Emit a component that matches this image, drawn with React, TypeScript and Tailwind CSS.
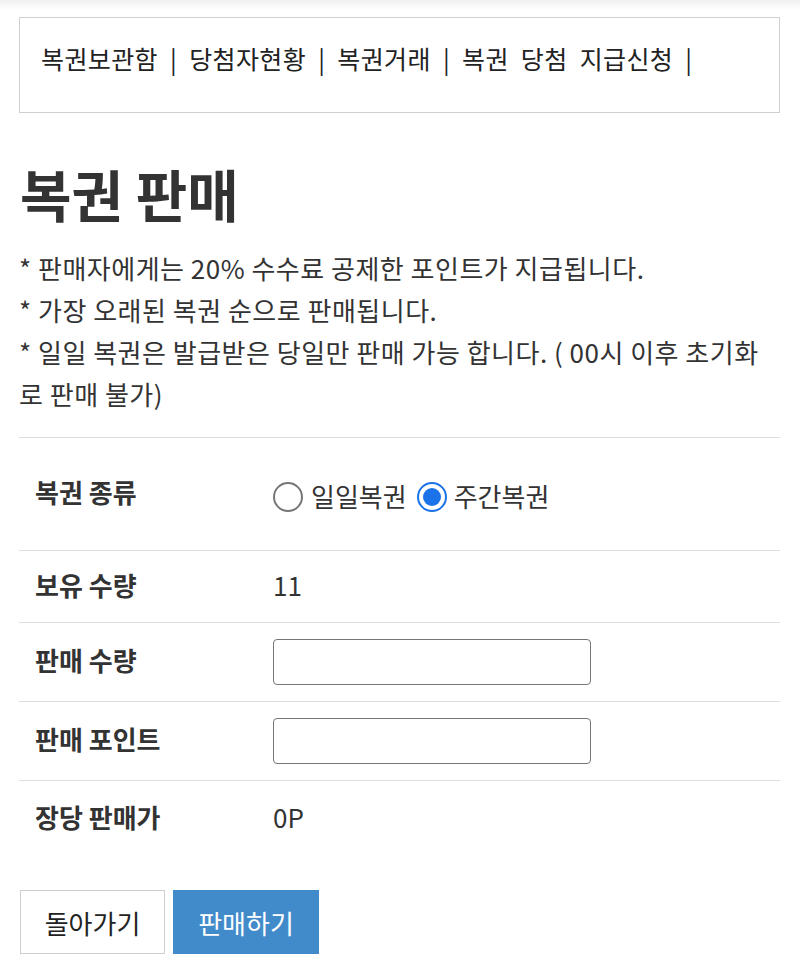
import React from "react";

const font = { fontFamily: '"Noto Sans CJK KR", "Noto Sans", sans-serif' };

function Radio({ checked }: { checked?: boolean }) {
  return checked ? (
    <span className="inline-flex w-[30px] h-[30px] rounded-full border-[2px] border-[#1a73e8] items-center justify-center bg-white">
      <span className="w-[18px] h-[18px] rounded-full bg-[#1a73e8]" />
    </span>
  ) : (
    <span className="inline-block w-[30px] h-[30px] rounded-full border-[2px] border-[#767676] bg-white" />
  );
}

function Row({
  label,
  children,
  h,
  last,
}: {
  label: string;
  children: React.ReactNode;
  h: string;
  last?: boolean;
}) {
  return (
    <div className={`flex items-center ${h} ${last ? "" : "border-b border-[#dedede]"}`}>
      <div className="w-[254px] pl-[16px] pb-[5px] text-[26px] font-bold text-[#333]">{label}</div>
      <div className="flex-1 flex items-center text-[26px] text-[#333]">{children}</div>
    </div>
  );
}

export default function App() {
  return (
    <div className="bg-white min-h-[967px] text-[#333]" style={font}>
      <div className="h-[10px] bg-gradient-to-b from-[#f0f0f0] to-white" />
      <div className="pl-[19px] pr-[20px] pt-[7px]">
        <div className="border border-[#d0d0d0] h-[96px] pt-[22px] pl-[21px] text-[25px] leading-[36px] text-[#222] tracking-[0.4px] [word-spacing:6px]">
          복권보관함 | 당첨자현황 | 복권거래 | 복권 당첨 지급신청 |
        </div>
        <h1 className="mt-[48px] text-[56px] font-bold leading-[64px] text-[#333] pl-[1px]">복권 판매</h1>
        <div className="mt-[22px] text-[26px] leading-[42px] text-[#333] tracking-[0.5px]">
          <p>* 판매자에게는 20% 수수료 공제한 포인트가 지급됩니다.</p>
          <p>* 가장 오래된 복권 순으로 판매됩니다.</p>
          <p>* 일일 복권은 발급받은 당일만 판매 가능 합니다. ( 00시 이후 초기화 로 판매 불가)</p>
        </div>
        <div className="mt-[22px] border-t border-[#dedede]">
          <Row label="복권 종류" h="h-[113px]">
            <div className="flex items-center pt-[6px]">
              <Radio />
              <span className="ml-[8px] mr-[10px] pb-[3px]">일일복권</span>
              <Radio checked />
              <span className="ml-[7px] pb-[3px]">주간복권</span>
            </div>
          </Row>
          <Row label="보유 수량" h="h-[72px]">
            <span className="pb-[5px]">11</span>
          </Row>
          <Row label="판매 수량" h="h-[79px]">
            <input className="w-[318px] h-[46px] border border-[#767676] rounded-[4px] bg-white" />
          </Row>
          <Row label="판매 포인트" h="h-[79px]">
            <input className="w-[318px] h-[46px] border border-[#767676] rounded-[4px] bg-white" />
          </Row>
          <Row label="장당 판매가" h="h-[75px]" last>
            <span className="pb-[5px]">0P</span>
          </Row>
        </div>
        <div className="mt-[34px] flex gap-[8px] pl-[1px]">
          <button className="w-[145px] h-[64px] border border-[#cfcfcf] bg-white text-[26px] text-[#222]">
            돌아가기
          </button>
          <button className="w-[146px] h-[64px] bg-[#428bca] text-[26px] text-white">판매하기</button>
        </div>
      </div>
    </div>
  );
}
